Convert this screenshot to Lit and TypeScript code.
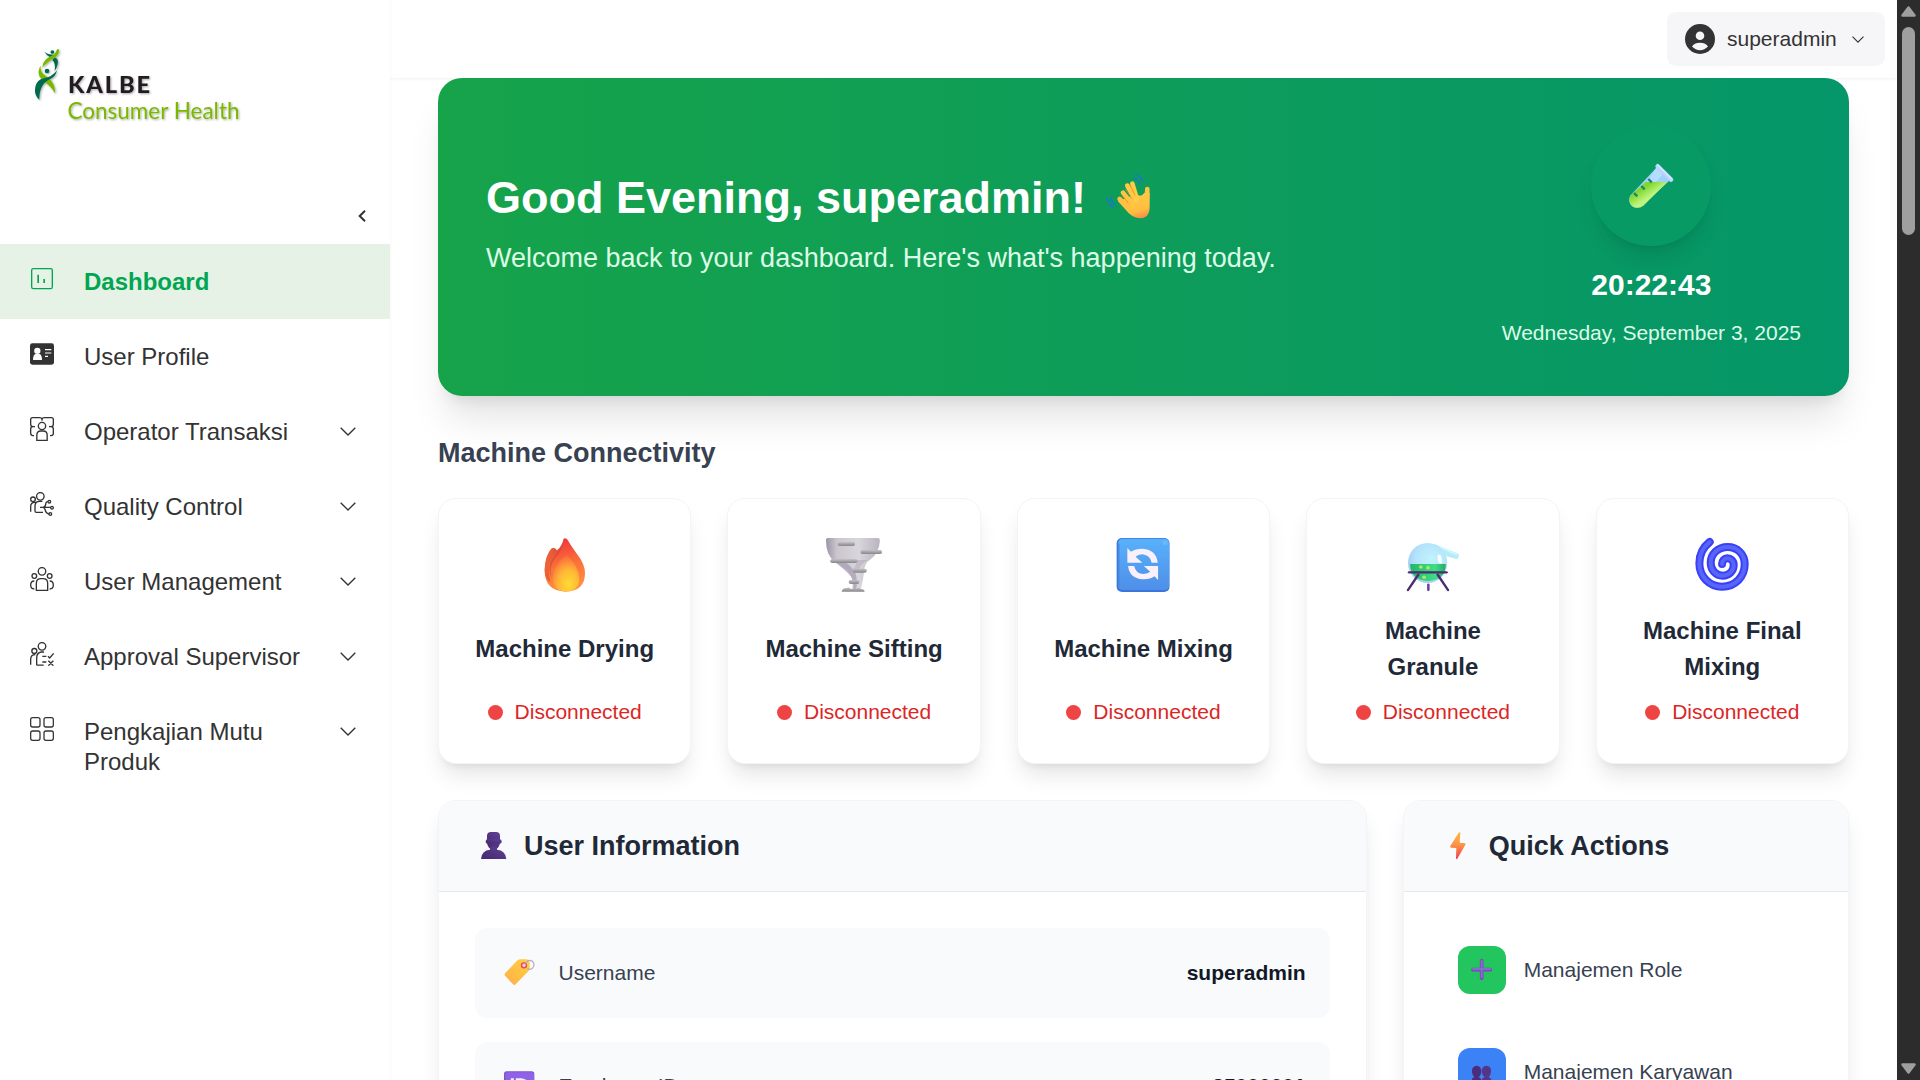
import { LitElement, html, svg, css } from "lit";
import { customElement, property } from "lit/decorators.js";

/* Line icons of the side menu, each drawn in a 72-unit square. */
const menuIcons: Record<string, { box: string; art: unknown }> = {
  dashboard: {
    box: "90 741 72 72",
    art: svg`<g fill="none" stroke="#00a651" stroke-width="4"><rect x="95" y="746" width="62" height="60" rx="5"/><path d="M114.500 764v25M132.500 777v12" stroke-width="5"/></g>`,
  },
  profile: {
    box: "90 66 72 72",
    art: svg`<rect x="90" y="70" width="72" height="64" rx="7" fill="#333"/><circle cx="112" cy="92.500" r="9.500" fill="#fff"/><path d="M99 120q0-17 8-18h11q8 1 8 18z" fill="#fff"/><path d="M135 89h19M135 99h19M135 109h9" stroke="#fff" stroke-width="3.600" fill="none"/>`,
  },
  operator: {
    box: "90 291 72 72",
    art: svg`<g fill="none" stroke="#333" stroke-width="4"><circle cx="126" cy="318" r="11"/><path d="M110.500 361v-16q0-12 12-12h7q12 0 12 12v16zM105 320H92M92 303v-4q0-6 6-6h21q6 0 7 5q1-5 7-5h21q6 0 6 6v4M147 320h13M92 300v13q0 7 7 7M160 300v13q0 7-7 7M99 320q-7 0-7 7v13q0 7 7 7h3M153 320q7 0 7 7v13q0 7-7 7h-3M126 295v7"/></g>`,
  },
  quality: {
    box: "90 516 72 72",
    art: svg`<g fill="none" stroke="#333" stroke-width="4"><circle cx="121" cy="529" r="11.300"/><circle cx="99" cy="538" r="7"/><path d="M92 575v-15q0-13 12-13h5M105 573v-15q0-14 14-14h8M105 573q0 4 4 4h20M120 562h32M128 562q8 0 9-9t7-8M128 562q7 1 8 9t11 11"/><circle cx="148" cy="545" r="4"/><circle cx="156" cy="563" r="4"/><circle cx="151" cy="582" r="4"/></g>`,
  },
  users: {
    box: "90 81 72 72",
    art: svg`<g fill="none" stroke="#333" stroke-width="4"><circle cx="126" cy="94" r="11.300"/><circle cx="103" cy="108" r="7"/><circle cx="149" cy="108" r="7"/><path d="M109 151v-21q0-14 14-14h6q14 0 14 14v21zM103 123q-11 0-11 12t11 12M149 123q11 0 11 12t-11 12"/></g>`,
  },
  approval: {
    box: "90 306 72 72",
    art: svg`<g fill="none" stroke="#333" stroke-width="4"><circle cx="126" cy="319" r="11.300"/><circle cx="103" cy="333" r="7.500"/><path d="M92 374v-16q0-14 14-14M110 376v-22q0-16 14-18h8M110 375.500h21M127 349h12M127 366h12M144 349l5 5 12-14M145 362l15 15M160 362l-15 15"/></g>`,
  },
  grid: {
    box: "90 531 72 72",
    art: svg`<g fill="none" stroke="#333" stroke-width="3.800"><rect x="92" y="533" width="28" height="28" rx="6"/><rect x="132" y="533" width="28" height="28" rx="6"/><rect x="92" y="573" width="28" height="28" rx="6"/><rect x="132" y="573" width="28" height="28" rx="6"/></g>`,
  },
};

const chevron = (w: number, h: number, stroke: number) => svg`
  <svg width=${w} height=${h} viewBox="0 0 16 9" fill="none" stroke="#333" stroke-width=${stroke}>
    <path d="M.7.7 8 8 15.300.7"/>
  </svg>`;

const logo = svg`
  <svg width="230" height="84" viewBox="30 45 230 84" style="display:block">
    <defs><filter id="soft" x="-10%" y="-10%" width="130%" height="130%"><feDropShadow dx="1" dy="1" stdDeviation=".8" flood-color="#000" flood-opacity=".35"/></filter></defs>
    <g filter="url(#soft)">
      <g transform="translate(0 20) scale(.33333)">
        <circle cx="157" cy="96" r="5.500" fill="#006b4f"/>
        <path d="M133 95q10 9 27 9l-7 9q-13-5-20-18z" fill="#006b4f"/>
        <path d="M163 112q14 4 10 20-2 11-9 21 2-11 0-20-1-8-7-13z" fill="#006b4f"/>
        <path d="M171 88h6q1 17-12 25-24 12-38 30 1-20 19-31 22-8 25-24z" fill="#7ab800"/>
        <path d="M122 137q-3 20 17 32 27 18 27 52-13-22-29-33-29-19-19-43z" fill="#7ab800"/>
        <circle cx="141" cy="153" r="7" fill="#006b4f"/>
        <path d="M171 151q-3 19-22 27-32 16-31 62-17-16-12-39 5-22 26-26 24-4 39-24z" fill="#006b4f"/>
      </g>
      <text class="brand" x="68" y="93" textLength="82" lengthAdjust="spacing">KALBE</text>
      <text class="unit" x="67.500" y="118.700" textLength="172" lengthAdjust="spacingAndGlyphs">Consumer Health</text>
    </g>
  </svg>`;

const art: Record<string, { box: string; w: number; h: number; body: unknown }> = {
  wave: {
    box: "30 25 140 140", w: 46.67, h: 46.67,
    body: svg`<defs><linearGradient id="wv" gradientUnits="userSpaceOnUse" x1="110" y1="80" x2="135" y2="164"><stop offset="0" stop-color="#ffcb47"/><stop offset=".7" stop-color="#ffbc42"/><stop offset="1" stop-color="#f58a45"/></linearGradient></defs>
      <g fill="none" stroke="#1b76d2" stroke-width="4.500" stroke-linecap="round"><path d="M122 32q14 2 22 18M117 42q12 2 17 14M36 99q4 19 18 29M47 98q4 16 14 22"/></g>
      <path d="M69 110 124 88q14 12 24-4l16 0v45q0 31-30 32-24-2-42-26z" fill="url(#wv)"/>
      <g stroke-linecap="round" fill="none" stroke-width="14"><path d="M74 103l28 27" stroke="#ffbf42"/><path d="M84 84l30 38" stroke="#ffc443"/><path d="M97 63l25 45M112 57l14 47" stroke="#ffcb47"/><path d="M157 73l-2 46" stroke="#ffc542"/></g>
      <path d="M81 92l20 24M91 72l20 30M105 60l15 32" stroke="#e88a2c" stroke-width="2.500" fill="none"/>`,
  },
  tube: {
    box: "560 480 150 150", w: 50, h: 50,
    body: svg`<defs><linearGradient id="tb" x1="0" y1="0" x2="1" y2="1"><stop offset=".3" stop-color="#82d62e"/><stop offset=".55" stop-color="#bdf57e"/><stop offset=".8" stop-color="#c9ee8a"/></linearGradient></defs>
      <path d="M651 500l39 39-84 76q-15 9-28 0-13-12-6-30z" fill="#9ed0fb"/>
      <path d="M651 500l20 20-24 26h-26z" fill="#b4dcff"/>
      <path d="M619 543h65l-72 71q-17 12-33 2-14-14-6-32z" fill="url(#tb)"/>
      <path d="M655 496l40 40" stroke="#b9d4fb" stroke-width="14" stroke-linecap="round"/><path d="M656 493l41 41" stroke="#d6e6ff" stroke-width="4" stroke-linecap="round"/>
      <path d="M627 534l10 10M606 555l10 10M584 576l10 10" stroke="#168a6a" stroke-width="7"/>`,
  },
  flame: {
    box: "279 165 196 180", w: 70, h: 60,
    body: svg`<defs><linearGradient id="f1" x1=".4" y1="0" x2=".6" y2="1"><stop offset="0" stop-color="#f0353c"/><stop offset=".5" stop-color="#fb7139"/><stop offset="1" stop-color="#ff9440"/></linearGradient><radialGradient id="f2" cx=".6" cy=".8" r=".8"><stop offset="0" stop-color="#ffdb31"/><stop offset=".5" stop-color="#ffb636"/><stop offset="1" stop-color="#f9653c"/></radialGradient><linearGradient id="f3" x1="0" y1="0" x2="1" y2=".4"><stop offset="0" stop-color="#f36a3e"/><stop offset="1" stop-color="#d9532f"/></linearGradient></defs>
      <path d="M373 176q5-4 10 2 10 18 26 42 24 32 24 60 0 54-55 55-58-2-58-64 0-40 18-64 9-8 15 4l5-3q12-14 15-32z" fill="url(#f1)"/>
      <path d="M354 211q-34 32-18 96-16-14-16-38 2-40 19-63 9-6 15 5z" fill="url(#f3)"/>
      <path d="M372 185q-2 26-22 48-18 24-11 60-10-24-2-48 12-20 25-38z" fill="#bf4a2e" opacity=".55"/>
      <path d="M377 227q4-4 8 1 32 34 32 68 0 37-38 38-37-2-37-40 2-36 35-67z" fill="url(#f2)"/>`,
  },
  tornado: {
    box: "1089.5 165 196 180", w: 70, h: 60,
    body: svg`<defs><linearGradient id="t1" x1="0" x2="1"><stop offset="0" stop-color="#9c94a3"/><stop offset=".2" stop-color="#cac5ce"/><stop offset=".6" stop-color="#d9d6dd"/><stop offset="1" stop-color="#b9b3bf"/></linearGradient><linearGradient id="t2" x1="0" y1="0" x2="0" y2="1"><stop offset="0" stop-color="#c4c4c6"/><stop offset="1" stop-color="#87878b"/></linearGradient></defs>
      <path d="M1113 174h142q5 1 5 8-2 36-26 56-18 12-18 36-3 26-9 52l-24 6q4-42-14-58-12-12-36-30-24-18-24-64 0-5 4-6z" fill="url(#t1)"/>
      <path d="M1125 240q40 30 56 52 6 14 4 38l8 3q6-36-2-54-12-26-40-40z" fill="#9f93ab" opacity=".6"/>
      <path d="M1196 240h30q-22 12-24 30h-20q12-10 14-30z" fill="#a59aae" opacity=".4"/>
      <g fill="url(#t2)"><rect x="1142" y="186" width="48" height="12" rx="5"/><rect x="1206" y="210" width="60" height="12" rx="5"/><rect x="1121" y="237" width="76" height="12" rx="5"/><rect x="1184" y="266" width="39" height="12" rx="5"/><rect x="1173" y="300" width="29" height="12" rx="5"/><path d="M1153 335q2-12 14-11 8-4 12 4 6-5 12 1 7-9 16-2 10 0 10 8z"/></g>`,
  },
  mixing: {
    box: "303.8 165 196 180", w: 70, h: 60,
    body: svg`<defs><linearGradient id="m1" x1="0" y1="0" x2="0" y2="1"><stop offset="0" stop-color="#58b1fb"/><stop offset="1" stop-color="#4f8fe8"/></linearGradient></defs>
      <rect x="328" y="174" width="148" height="162" rx="15" fill="#3a76dc"/><rect x="332" y="176" width="143" height="154" rx="13" fill="url(#m1)"/><path d="M334 190v130" stroke="#3d82e2" stroke-width="5" opacity=".6"/><circle cx="464" cy="188" r="7" fill="#80caff" opacity=".4"/>
      <g fill="#faf0fc"><path d="M358 204l10 11q12-9 33-9 38 3 42 42h-17q-4-22-25-25-12 0-20 7l19 18h-42z"/><path d="M444 300l-10-11q-12 10-33 9-37-3-41-40h17q4 21 24 24 12 0 21-7l-18-17h40z"/></g>`,
  },
  granule: {
    box: "1114 165 196 180", w: 70, h: 60,
    body: svg`<defs><radialGradient id="g1" cx=".6" cy=".4" r=".6"><stop offset="0" stop-color="#c2f3fc"/><stop offset=".7" stop-color="#b3e3fc"/><stop offset="1" stop-color="#a6d0f5"/></radialGradient><linearGradient id="g2" x1="0" x2="1"><stop offset="0" stop-color="#25b567"/><stop offset=".7" stop-color="#3fdd85"/><stop offset="1" stop-color="#27a968"/></linearGradient></defs>
      <path d="M1216 192l67 29q3 2 1 8t-4 9l-40-12z" fill="#b5ecf6"/><path d="M1230 201l50 23" stroke="#cff8ff" stroke-width="5"/>
      <ellipse cx="1197" cy="249" rx="55" ry="60" fill="url(#g1)"/>
      <path d="M1148 252h100q0 48-50 51-50-4-50-51z" fill="url(#g2)"/>
      <ellipse cx="1231" cy="237" rx="6" ry="14" fill="#fff" opacity=".9" transform="rotate(-10 1231 237)"/>
      <g fill="#a5e868"><circle cx="1178" cy="261" r="5.500"/><circle cx="1198" cy="263" r="5.500"/><circle cx="1187" cy="292" r="5.500"/></g>
      <g stroke-linecap="round" fill="none" stroke="#4a2d71"><path d="M1145 277h105" stroke-width="7"/><path d="M1171 284l-29 46M1225 284l29 46" stroke-width="7"/><path d="M1199 314v16" stroke-width="7" stroke="#653fa5"/></g>`,
  },
  cyclone: {
    box: "381.9 165 210 180", w: 70, h: 60,
    body: svg`<g fill="none" stroke-linecap="round"><path d="M450 186C428 203 419 224 419 250C419 291 450 320 487 320C527 320 555 290 555 252C555 222 532 201 504 201C474 201 453 223 453 248C453 271 469 287 489 287C509 287 522 272 522 255C522 242 512 235 503 235C494 235 487 243 487 252" stroke="#3a40f5" stroke-width="24"/><path d="M450 186C428 203 419 224 419 250C419 291 450 320 487 320C527 320 555 290 555 252C555 222 532 201 504 201C474 201 453 223 453 248C453 271 469 287 489 287C509 287 522 272 522 255C522 242 512 235 503 235C494 235 487 243 487 252" stroke="#5765fb" stroke-width="12"/></g>`,
  },
  person: {
    box: "135 108 111 120", w: 37, h: 40,
    body: svg`<defs><linearGradient id="p1" x1="0" y1="1" x2="1" y2="0"><stop offset="0" stop-color="#452a6c"/><stop offset="1" stop-color="#60409a"/></linearGradient></defs>
      <g fill="url(#p1)"><path d="M171 138q0-12 12-12h15q12 0 12 12v17q0 14-10 21-9 6-19 0-10-7-10-21z"/><rect x="167" y="148" width="48" height="13" rx="6"/><path d="M180 170h21v9q26 2 28 28h-76q2-26 27-28z"/></g>`,
  },
  bolt: {
    box: "119 108 111 120", w: 37, h: 40,
    body: svg`<defs><linearGradient id="b1" x1="0" y1="0" x2="0" y2="1"><stop offset="0" stop-color="#fcb64a"/><stop offset=".45" stop-color="#fd9544"/><stop offset="1" stop-color="#f23a57"/></linearGradient></defs>
      <path d="M178 127q3 0 2 3l-2 28 16 2q3 1 1 4l-24 42q-4 3-4-1l1-31-16-1q-4-1-2-5l24-38q2-3 4-3z" fill="url(#b1)"/>`,
  },
  tag: {
    box: "208 489 123 120", w: 41, h: 40,
    body: svg`<defs><linearGradient id="l1" x1="0" y1="1" x2="1" y2="0"><stop offset="0" stop-color="#ffae4c"/><stop offset="1" stop-color="#ffd23e"/></linearGradient></defs>
      <path d="M262 512q4-3 9-4l20 0q8 1 9 9v20q0 3-4 7l-38 39q-4 4-8 0l-24-26q-3-4 1-8z" fill="url(#l1)"/>
      <circle cx="283" cy="526" r="7.500" fill="#d9d3e6" stroke="#f0434f" stroke-width="4"/>
      <path d="M288 523q2-12 13-12 12 2 12 14-2 12-13 13l-7-2" fill="none" stroke="#b8a9c4" stroke-width="3.500"/>`,
  },
  id: {
    box: "207 831 123 120", w: 41, h: 40,
    body: svg`<rect x="222" y="844" width="91" height="90" rx="8" fill="#7a55c9"/><rect x="226" y="847" width="86" height="84" rx="7" fill="#8f62e8"/><path d="M247 865v45M262 869h12q18 2 18 20t-18 20h-12z" fill="none" stroke="#f7effc" stroke-width="9"/>`,
  },
  plus: {
    box: "204 498 84 84", w: 28, h: 28,
    body: svg`<g stroke-linecap="round"><path d="M245 512v53M219 539h52" stroke="#7a49bd" stroke-width="11"/><path d="M245 512v50M219 537h52" stroke="#8a68d2" stroke-width="6"/></g>`,
  },
  people: {
    box: "204 804 84 84", w: 28, h: 28,
    body: svg`<g fill="#4b2d7b"><path d="M216 845q-1-17 14-18 14 1 14 18-2 13-9 16 11 3 12 22h-34q0-19 10-22-6-4-7-16z"/><path d="M245 845q0-17 14-18 15 1 14 18-1 12-7 16 10 3 10 22h-34q2-19 12-22-7-4-9-16z" fill="#553589"/></g>`,
  },
};

@customElement("art-icon")
class ArtIcon extends LitElement {
  static styles = css`:host{display:block;flex:none}svg{display:block}`;
  @property() name = "";
  render() {
    const a = art[this.name];
    return html`<svg width=${a.w} height=${a.h} viewBox=${a.box} preserveAspectRatio="none">${a.body}</svg>`;
  }
}

@customElement("side-menu")
class SideMenu extends LitElement {
  static styles = css`
    :host{display:flex;flex-direction:column;width:390px;flex:none;background:#fff;height:1080px;box-sizing:border-box;box-shadow:0 0 3px rgba(0,0,0,.05)}
    .logo{padding:45px 0 0 30px;height:160px;box-sizing:border-box}
    .brand{font:900 23.6px Lato,"Liberation Sans",sans-serif;fill:#231f20}
    .unit{font:400 23.5px Lato,"Liberation Sans",sans-serif;fill:#7ab800}
    .fold{display:flex;justify-content:flex-end;padding:50px 24.500px 0 0;height:84px;box-sizing:border-box}
    .item{display:flex;align-items:flex-start;min-height:75px;box-sizing:border-box;padding:23px 34px 22px 30px;color:#333;font-size:24px;line-height:30px}
    .item.on{background:#e6f2e6;color:#00a651;font-weight:700}
    .item > svg{flex:none}
    .name{margin-left:30px;flex:1}
    .more{margin-top:10px;height:9px;display:flex}
  `;
  items = [
    ["dashboard", "Dashboard", false],
    ["profile", "User Profile", false],
    ["operator", "Operator Transaksi", true],
    ["quality", "Quality Control", true],
    ["users", "User Management", true],
    ["approval", "Approval Supervisor", true],
    ["grid", "Pengkajian Mutu Produk", true],
  ] as [string, string, boolean][];
  render() {
    return html`
      <div class="logo">${logo}</div>
      <div class="fold"><svg width="8" height="12" viewBox="0 0 8 12" fill="none" stroke="#333" stroke-width="2"><path d="M7 .800 1.700 6 7 11.200"/></svg></div>
      ${this.items.map(([icon, label, more], i) => html`
        <div class="item ${i === 0 ? "on" : ""}">
          <svg width="24" height="24" viewBox=${menuIcons[icon].box}>${menuIcons[icon].art}</svg>
          <span class="name">${label}</span>
          ${more ? html`<span class="more">${chevron(16, 9, 1.35)}</span>` : ""}
        </div>`)}
    `;
  }
}

@customElement("app-root")
class AppRoot extends LitElement {
  static styles = css`
    :host{display:flex;width:1920px;height:1080px;overflow:hidden;background:#fff;font-family:"Liberation Sans",Arial,sans-serif;position:relative}
    .main{flex:1;min-width:0;display:flex;flex-direction:column;height:1080px;overflow:hidden}
    .top{height:78px;flex:none;box-sizing:border-box;display:flex;justify-content:flex-end;padding:12px 12px 12px 0;box-shadow:0 1px 3px rgba(0,0,0,.06)}
    .account{display:flex;align-items:center;width:218px;height:54px;box-sizing:border-box;padding:0 21px 0 18px;background:#f6f6f9;border-radius:9px;font-size:21px;color:#333}
    .account span{margin:0 auto 0 12px}
    .page{padding:0 48px;flex:none;position:relative}
    .banner{height:318px;box-sizing:border-box;padding:48px;border-radius:24px;display:flex;justify-content:space-between;align-items:center;background:linear-gradient(to right,#16a34a,#059669);box-shadow:0 30px 37.5px -7.5px rgba(0,0,0,.1),0 12px 15px -9px rgba(0,0,0,.1)}
    .hello{padding-bottom:24px;color:#dcfce7}
    h1{margin:0 0 12px;font-size:45px;line-height:54px;color:#fff;display:flex;align-items:center;white-space:pre}
    h1 art-icon{margin:0 0 3px 19px}
    .hello p{margin:0;font-size:27px;line-height:42px}
    .clock{display:flex;flex-direction:column;align-items:center;color:#dcfce7}
    .round{width:120px;height:120px;border-radius:50%;display:flex;align-items:center;justify-content:center;background:#089a65;box-shadow:0 15px 22.5px -4.5px rgba(0,0,0,.1),0 6px 9px -6px rgba(0,0,0,.1)}
    .time{margin-top:18px;font-size:30px;line-height:42px;font-weight:700;color:#fff}
    .date{margin-top:12px;font-size:21px;line-height:30px}
    h2{margin:36px 0 24px;font-size:27px;line-height:42px;color:#374151}
    .machines{display:grid;grid-template-columns:repeat(5,1fr);gap:36px}
    .card,.panel{background:#fff;border:1px solid #f3f4f6;border-radius:18px;box-shadow:0 15px 22.5px -4.5px rgba(0,0,0,.1),0 6px 9px -6px rgba(0,0,0,.1)}
    .card{height:266px;box-sizing:border-box;padding:36px;display:flex;flex-direction:column;align-items:center}
    .card h3{margin:18px -3px 12px;height:72px;display:flex;align-items:center;text-align:center;font-size:24px;line-height:36px;color:#1f2937}
    .status{display:flex;align-items:center;gap:12px;font-size:21px;line-height:30px;color:#dc2626}
    .dot{width:15px;height:15px;border-radius:50%;background:#ef4444}
    .lower{display:grid;gap:36px;margin-top:36px;grid-template-columns:928.700px 446.300px}
    .panel{height:480px;box-sizing:border-box;overflow:hidden}
    .head{height:90px;display:flex;align-items:center;gap:12px;padding:0 36px;background:#f9fafb;border-bottom:1px solid #e5e7eb;font-size:27px;line-height:42px;font-weight:700;color:#1f2937}
    .body{padding:36px;display:flex;flex-direction:column;gap:24px}
    .row{display:flex;align-items:center;height:90px;box-sizing:border-box;padding:0 24px;background:#f9fafb;border-radius:12px;font-size:21px;line-height:30px;color:#374151}
    .row span{margin-left:18.500px}
    .row b{margin-left:auto;color:#111827}
    .row + .row span,.row + .row b{padding-bottom:2px}
    .body.quick{gap:18px}
    .action{display:flex;align-items:center;gap:18px;padding:18px;font-size:21px;line-height:30px;color:#374151}
    .tile{width:48px;height:48px;border-radius:12px;display:flex;align-items:center;justify-content:center;background:#22c55e}
    .tile.blue{background:#3b82f6}
    .scroll{width:23px;flex:none;background:#2c2c2c;display:flex;flex-direction:column;align-items:center;box-sizing:border-box;padding:6px 0}
    .scroll svg{display:block}
    .thumb{width:13px;height:208px;border-radius:7px;background:#9f9f9f;margin:10px 0 auto}
  `;
  machines = [
    ["flame", "Machine Drying"],
    ["tornado", "Machine Sifting"],
    ["mixing", "Machine Mixing"],
    ["granule", "Machine Granule"],
    ["cyclone", "Machine Final Mixing"],
  ];
  render() {
    return html`
      <side-menu></side-menu>
      <div class="main">
        <div class="top">
          <div class="account">
            <svg width="30" height="30" viewBox="0 0 30 30"><circle cx="15" cy="15" r="15" fill="#333"/><circle cx="15" cy="11.700" r="4.300" fill="#f6f6f9"/><path d="M7 22.600Q9 18.700 15 18.700T23 22.600Q19.500 26.300 15 26.300T7 22.600z" fill="#f6f6f9"/></svg>
            <span>superadmin</span>
            ${chevron(12, 7, 1.5)}
          </div>
        </div>
        <div class="page">
          <div class="banner">
            <div class="hello">
              <h1>Good Evening, superadmin!<art-icon name="wave"></art-icon></h1>
              <p>Welcome back to your dashboard. Here's what's happening today.</p>
            </div>
            <div class="clock">
              <div class="round"><art-icon name="tube"></art-icon></div>
              <div class="time">20:22:43</div>
              <div class="date">Wednesday, September 3, 2025</div>
            </div>
          </div>
          <h2>Machine Connectivity</h2>
          <div class="machines">
            ${this.machines.map(([icon, name]) => html`
              <div class="card">
                <art-icon name=${icon}></art-icon>
                <h3>${name}</h3>
                <div class="status"><span class="dot"></span>Disconnected</div>
              </div>`)}
          </div>
          <div class="lower">
            <div class="panel">
              <div class="head"><art-icon name="person"></art-icon>User Information</div>
              <div class="body">
                <div class="row"><art-icon name="tag"></art-icon><span>Username</span><b>superadmin</b></div>
                <div class="row"><art-icon name="id"></art-icon><span>Employee ID</span><b>25000001</b></div>
              </div>
            </div>
            <div class="panel">
              <div class="head"><art-icon name="bolt"></art-icon>Quick Actions</div>
              <div class="body quick">
                <div class="action"><div class="tile"><art-icon name="plus"></art-icon></div>Manajemen Role</div>
                <div class="action"><div class="tile blue"><art-icon name="people"></art-icon></div>Manajemen Karyawan</div>
              </div>
            </div>
          </div>
        </div>
      </div>
      <div class="scroll">
        <svg width="15" height="11" viewBox="0 0 15 11"><path d="M7.500 1.500 13.500 9.500H1.500z" fill="#9f9f9f" stroke="#9f9f9f" stroke-width="2.500" stroke-linejoin="round"/></svg>
        <div class="thumb"></div>
        <svg width="15" height="11" viewBox="0 0 15 11"><path d="M7.500 9.500 13.500 1.500H1.500z" fill="#9f9f9f" stroke="#9f9f9f" stroke-width="2.500" stroke-linejoin="round"/></svg>
      </div>
    `;
  }
}
